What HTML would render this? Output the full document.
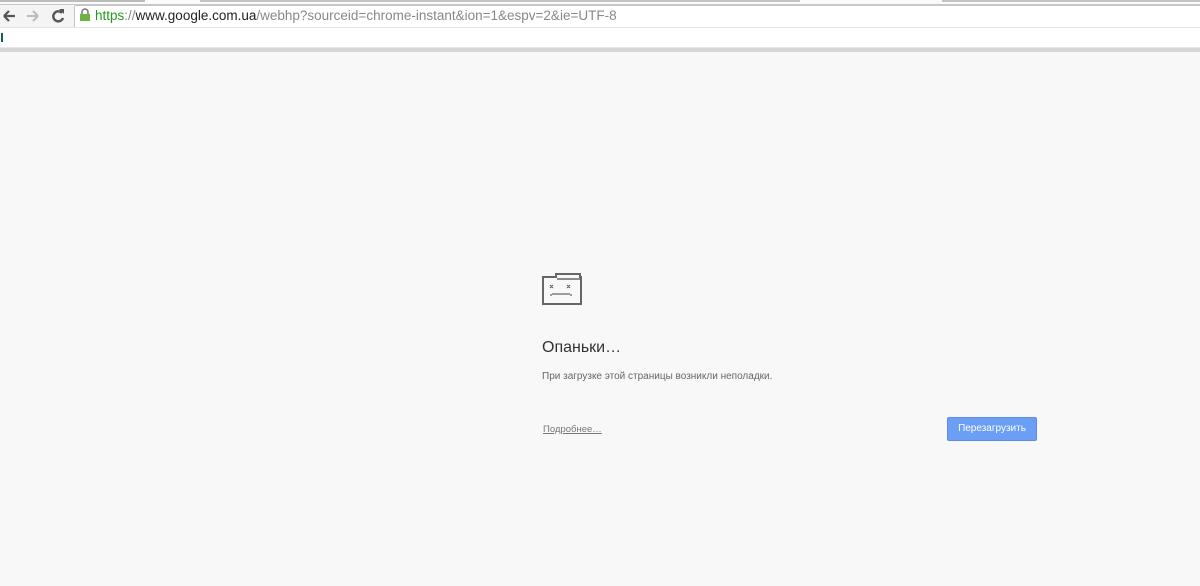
<!DOCTYPE html>
<html><head><meta charset="utf-8"><style>
body{margin:0;width:1200px;height:586px;background:#f8f8f8;font-family:"Liberation Sans",sans-serif;position:relative;overflow:hidden}
.a{position:absolute}
</style></head><body>
<div class="a" style="left:0;top:0;width:1200px;height:30px;background:#f4f4f4"></div>
<div class="a" style="left:0;top:0;width:1200px;height:4px;background:#fafafa;border-bottom:1px solid #c8c8c8"></div>
<div class="a" style="left:0;top:0;width:145px;height:2px;background:#bbb"></div>
<div class="a" style="left:200px;top:0;width:600px;height:2px;background:#c4c4c4"></div>
<div class="a" style="left:942px;top:0;width:258px;height:2px;background:#c4c4c4"></div>
<div class="a" style="left:74px;top:5px;width:1130px;height:21px;background:#fff;border:1px solid #c6c6c6;border-radius:2px"></div>
<div class="a" style="left:0;top:27px;width:1200px;height:19px;background:#fff;border-top:1px solid #e4e4e4"></div>
<div class="a" style="left:1px;top:33px;width:2px;height:9px;background:#1a5a5a"></div>
<div class="a" style="left:0;top:47px;width:1200px;height:4px;background:#d6d6d6;border-top:1px solid #e8e8e8"></div>
<svg class="a" style="left:0;top:6px" width="74" height="22">
<path d="M4 10h11M4 10l5-5M4 10l5 5" stroke="#555" stroke-width="2.2" fill="none"/>
<path d="M38 10h-11M38 10l-5-5M38 10l-5 5" stroke="#bbb" stroke-width="2" fill="none"/>
<path d="M62 7a5 5 0 1 0 1 5" stroke="#555" stroke-width="2.4" fill="none"/><path d="M59 3h5v5z" fill="#555"/>
</svg>
<svg class="a" style="left:79px;top:8px" width="12" height="14"><path d="M3 6V4a3 3 0 0 1 6 0v2" stroke="#777" stroke-width="1.5" fill="none"/><rect x="1" y="6" width="10" height="7" fill="#6cb33f"/></svg>
<div class="a" style="left:95px;top:8px;font-size:13.5px;color:#888;white-space:nowrap"><span style="color:#1e9c1e">https</span>://<span style="color:#222">www.google.com.ua</span>/webhp?sourceid=chrome-instant&amp;ion=1&amp;espv=2&amp;ie=UTF-8</div>
<svg class="a" style="left:540px;top:270px" width="46" height="38">
<path d="M3 7H16V4H40V7H41V34H3Z" fill="none" stroke="#666" stroke-width="2"/>
<path d="M17 9H40" stroke="#666" stroke-width="1.5"/>
<path d="M10 15l3 3M13 15l-3 3M27 15l3 3M30 15l-3 3" stroke="#666" stroke-width="1.2"/>
<path d="M10 25h2M12 24h18M30 25h2" stroke="#666" stroke-width="1.3"/>
</svg>
<div class="a" style="left:542px;top:339px;font-size:16px;color:#333">Опаньки…</div>
<div class="a" style="left:542px;top:371px;font-size:10px;color:#666">При загрузке этой страницы возникли неполадки.</div>
<div class="a" style="left:543px;top:424px;font-size:9.5px;color:#777;text-decoration:underline">Подробнее…</div>
<div class="a" style="left:947px;top:417px;width:90px;height:24px;background:#6a9ff5;border:1px solid #5b8de8;box-sizing:border-box;border-radius:2px;color:#fff;font-size:10px;text-align:center;line-height:22px">Перезагрузить</div>
</body></html>
